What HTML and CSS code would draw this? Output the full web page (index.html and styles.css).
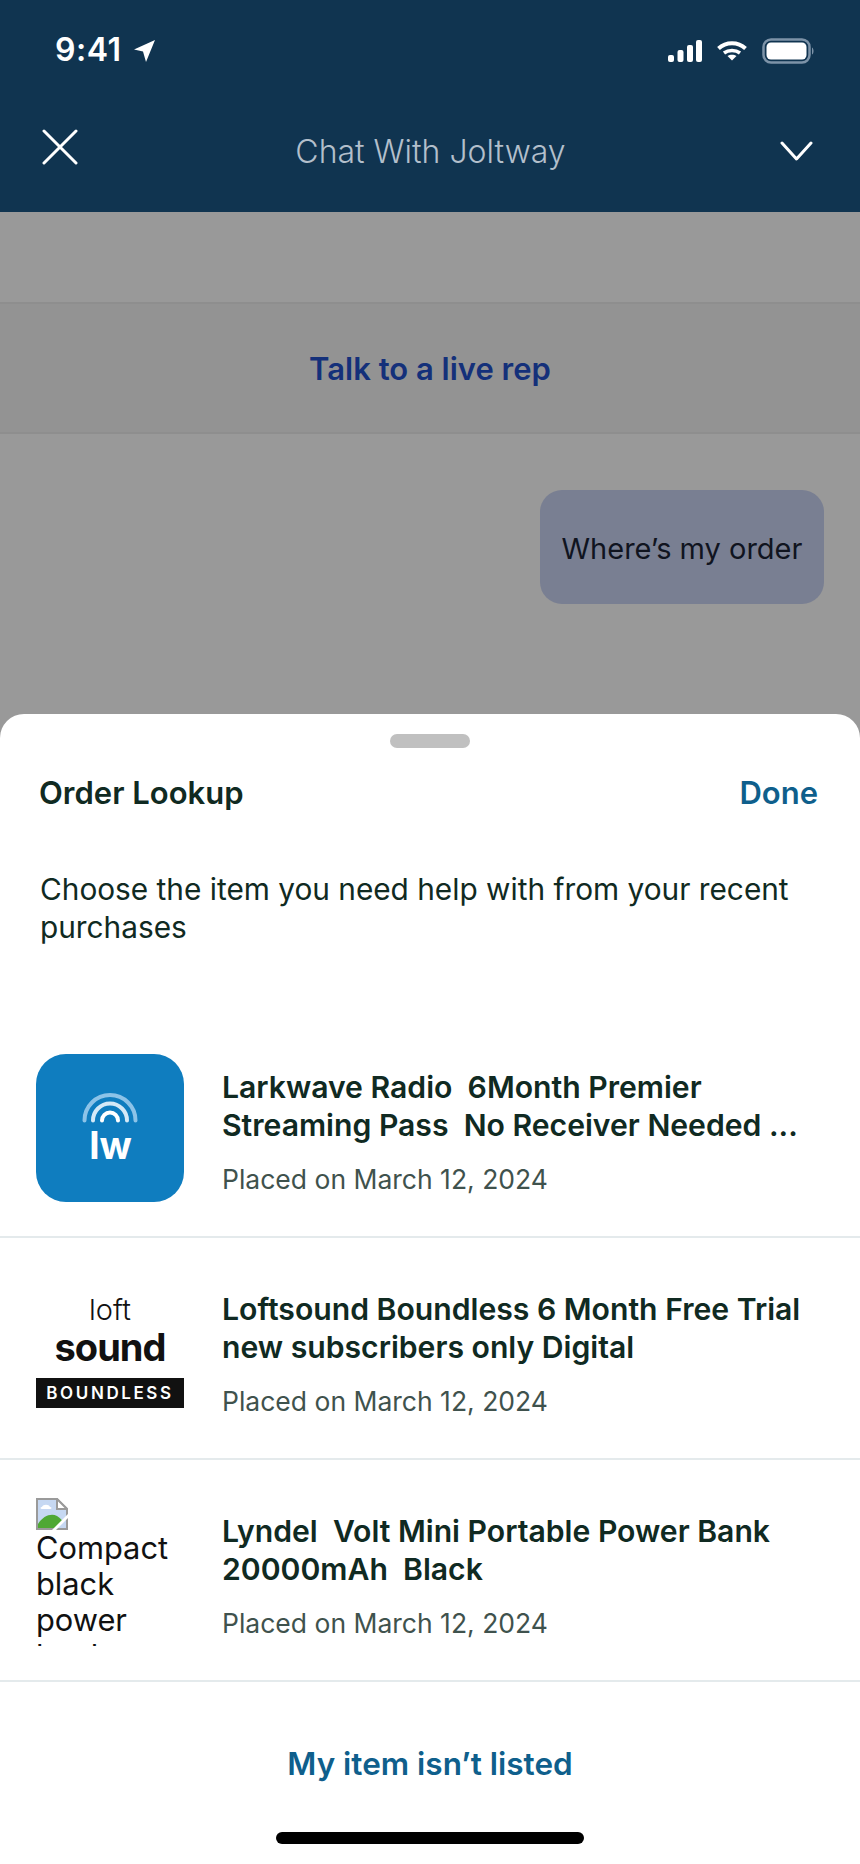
FILE: index.html
```html
<!DOCTYPE html>
<html lang="en">
<head>
<meta charset="utf-8">
<title>Chat With Joltway</title>
<link rel="stylesheet" href="styles.css">
</head>
<body>
<div class="screen">

  <div class="topbar">
    <div class="status">
      <div class="clock">
        <span>9:41</span>
        <svg class="arrow" width="21" height="22" viewBox="0 0 21 22"><path d="M21 0 L0 9.500 L9 11.500 L12 22 Z" fill="#fff"/></svg>
      </div>
      <div class="status-icons">
        <svg width="34" height="22" viewBox="0 0 34 22" fill="#fff">
          <rect x="0" y="15" width="6" height="7" rx="2"/>
          <rect x="9.500" y="10" width="6" height="12" rx="2"/>
          <rect x="19" y="5" width="6" height="17" rx="2"/>
          <rect x="28" y="0" width="6" height="22" rx="2"/>
        </svg>
        <svg width="30" height="20" viewBox="0 0 30 20" fill="none" stroke="#fff" stroke-width="4">
          <path d="M1.500 7.500 C9 0.500 21 0.500 28.500 7.500"/>
          <path d="M7 12 C11.500 8.500 18.500 8.500 23 12" stroke-width="3.500"/>
          <path d="M15 19.500 L10.500 15 C13 13.300 17 13.300 19.500 15 Z" fill="#fff" stroke="none"/>
        </svg>
        <svg width="52" height="26" viewBox="0 0 52 26">
          <rect x="1.500" y="1.500" width="46" height="23" rx="7.500" fill="none" stroke="#7d93a8" stroke-width="2.500"/>
          <rect x="4.500" y="4.500" width="40" height="17" rx="4.500" fill="#fff"/>
          <path d="M50 9.500 C52 10.500 52 15.500 50 16.500 Z" fill="#7d93a8"/>
        </svg>
      </div>
    </div>
    <div class="navrow">
      <svg width="36" height="36" viewBox="0 0 36 36" fill="none" stroke="#fff" stroke-width="3" stroke-linecap="round"><path d="M2 2 L34 34 M34 2 L2 34"/></svg>
      <div class="navtitle">Chat With Joltway</div>
      <svg class="chevron" width="33" height="20" viewBox="0 0 33 20" fill="none" stroke="#fff" stroke-width="3" stroke-linecap="round" stroke-linejoin="round"><path d="M2 2 L16.500 18 L31 2"/></svg>
    </div>
  </div>

  <div class="chat">
    <div class="liverep">Talk to a live rep</div>
    <div class="bubble-row">
      <div class="bubble">Where’s my order</div>
    </div>
  </div>

  <div class="sheet">
    <div class="handle"></div>
    <div class="sheet-head">
      <div class="sheet-title">Order Lookup</div>
      <div class="done">Done</div>
    </div>
    <p class="intro">Choose the item you need help with from your recent purchases</p>

    <div class="order">
      <div class="thumb lw">
        <svg width="60" height="32" viewBox="0 0 60 32" fill="none" stroke-linecap="round">
          <path d="M4.500 28.500 A25.500 25.500 0 0 1 55.500 28.500" stroke="#8cc3e8" stroke-width="4"/>
          <path d="M13 28.500 A17 17 0 0 1 47 28.500" stroke="#d4e9f7" stroke-width="4"/>
          <path d="M22 28.500 A8 8 0 0 1 38 28.500" stroke="#fff" stroke-width="4"/>
        </svg>
        <div class="lw-mark">lw</div>
      </div>
      <div class="order-info">
        <div class="order-name">Larkwave Radio&nbsp; 6Month Premier<br>Streaming Pass&nbsp; No Receiver Needed ...</div>
        <div class="order-date">Placed on March 12, 2024</div>
      </div>
    </div>

    <div class="order">
      <div class="thumb loft">
        <div class="loft-top">loft</div>
        <div class="loft-mid">sound</div>
        <div class="loft-bar">BOUNDLESS</div>
      </div>
      <div class="order-info">
        <div class="order-name">Loftsound Boundless 6 Month Free Trial<br>new subscribers only Digital</div>
        <div class="order-date">Placed on March 12, 2024</div>
      </div>
    </div>

    <div class="order">
      <div class="thumb broken">
        <svg class="broken-icon" width="32" height="32" viewBox="0 0 32 32">
          <path d="M1 1 H21 L31 11 V31 H1 Z" fill="#c6d8f2" stroke="#9a9a9a" stroke-width="2"/>
          <path d="M21 1 V11 H31 Z" fill="#fff" stroke="#9a9a9a" stroke-width="2"/>
          <path d="M2 30 V26 C7 18 15 15 21 18 C24 20 26 22 27 24 L21 30 Z" fill="#4fa834"/>
          <path d="M6 9 C7 6 13 6 14 9 C16 9 16 11 14 11 H6 C4 11 4 9 6 9 Z" fill="#fff"/>
          <path d="M16 32 L32 16 V20 L20 32 Z" fill="#fff"/>
        </svg>
        <div>Compact black power bank</div>
      </div>
      <div class="order-info">
        <div class="order-name">Lyndel&nbsp; Volt Mini Portable Power Bank<br>20000mAh&nbsp; Black</div>
        <div class="order-date">Placed on March 12, 2024</div>
      </div>
    </div>

    <div class="not-listed">My item isn’t listed</div>
    <div class="home-bar"></div>
  </div>

</div>
</body>
</html>
```

FILE: styles.css
```css
* { box-sizing: border-box; }
html, body { margin: 0; padding: 0; }
body { font-family: Inter, "Noto Sans", sans-serif; background: #fff; color: #102a22; }

.screen { width: 860px; height: 1864px; display: flex; flex-direction: column; overflow: hidden; background: #999; }

/* top bar */
.topbar { height: 212px; background: #103450; color: #fff; padding: 36px 0 0; flex: none; }
.status { display: flex; justify-content: space-between; align-items: flex-start; height: 93px; padding: 0 46px 0 55px; }
.clock { display: flex; align-items: center; gap: 12px; font-size: 32px; font-weight: 600; line-height: 28px; letter-spacing: 0.5px; }
.arrow { flex: none; margin-top: 2px; }
.status-icons { display: flex; align-items: center; gap: 15px; padding-top: 2px; }
.navrow { display: flex; justify-content: space-between; align-items: flex-start; padding: 0 47px 0 42px; }
.navtitle { font-size: 32px; font-weight: 300; color: #b3bfcb; line-height: 40px; margin: 3px 0 0 3px; }
.chevron { margin-top: 12px; }

/* chat behind the sheet */
.chat { height: 502px; flex: none; padding-top: 90px; }
.liverep { height: 132px; background: #939393; border-top: 2px solid #8e8e8e; border-bottom: 2px solid #8e8e8e; display: flex; align-items: center; justify-content: center; font-size: 31px; font-weight: 600; color: #14307a; }
.bubble-row { display: flex; justify-content: flex-end; padding: 56px 36px 0 0; }
.bubble { width: 284px; height: 114px; border-radius: 22px; background: #797f92; color: #10141f; font-size: 29px; padding-top: 3px; display: flex; align-items: center; justify-content: center; }

/* bottom sheet */
.sheet { flex: 1; background: #fff; border-radius: 24px 24px 0 0; display: flex; flex-direction: column; }
.handle { width: 80px; height: 14px; border-radius: 7px; background: #c0c0c0; margin: 20px auto 0; flex: none; }
.sheet-head { display: flex; justify-content: space-between; align-items: center; padding: 0 42px 0 39px; margin-top: 24px; height: 40px; font-size: 31px; font-weight: 600; }
.done { color: #0f5f8c; }
.intro { margin: 58px 50px 70px 40px; font-size: 29.8px; line-height: 38px; height: 76px; flex: none; }

.order { height: 222px; display: flex; align-items: center; gap: 38px; padding: 4px 36px 0; border-bottom: 2px solid #e4eaec; flex: none; }
.thumb { width: 148px; height: 148px; flex: none; overflow: hidden; }
.order-info { flex: 1; padding-top: 8px; }
.order-name { font-size: 30.15px; font-weight: 600; line-height: 38px; white-space: nowrap; }
.order-date { font-size: 26.5px; line-height: 34px; color: #3f524d; margin-top: 18px; }

.lw { background: #0f7dbf; border-radius: 30px; display: flex; flex-direction: column; align-items: center; padding-top: 38px; }
.lw-mark { color: #fff; font-size: 38px; font-weight: 700; line-height: 38px; margin-top: 2px; padding-left: 1px; }

.loft { display: flex; flex-direction: column; align-items: center; color: #111; padding-top: 17px; }
.loft-top { font-size: 29px; font-weight: 300; line-height: 34px; }
.loft-mid { font-size: 38px; font-weight: 700; line-height: 40px; letter-spacing: -1px; }
.loft-bar { width: 148px; height: 30px; background: #111; color: #fff; font-size: 17px; font-weight: 600; line-height: 30px; letter-spacing: 2.6px; text-align: center; margin-top: 11px; flex: none; }

.broken { font-size: 30.8px; line-height: 36px; color: #111; }
.broken-icon { display: block; }

.not-listed { height: 150px; flex: none; text-align: center; font-size: 31.5px; font-weight: 600; line-height: 164px; color: #0f5f8c; }
.home-bar { width: 308px; height: 12px; border-radius: 6px; background: #000; margin: 0 auto; flex: none; }
```
